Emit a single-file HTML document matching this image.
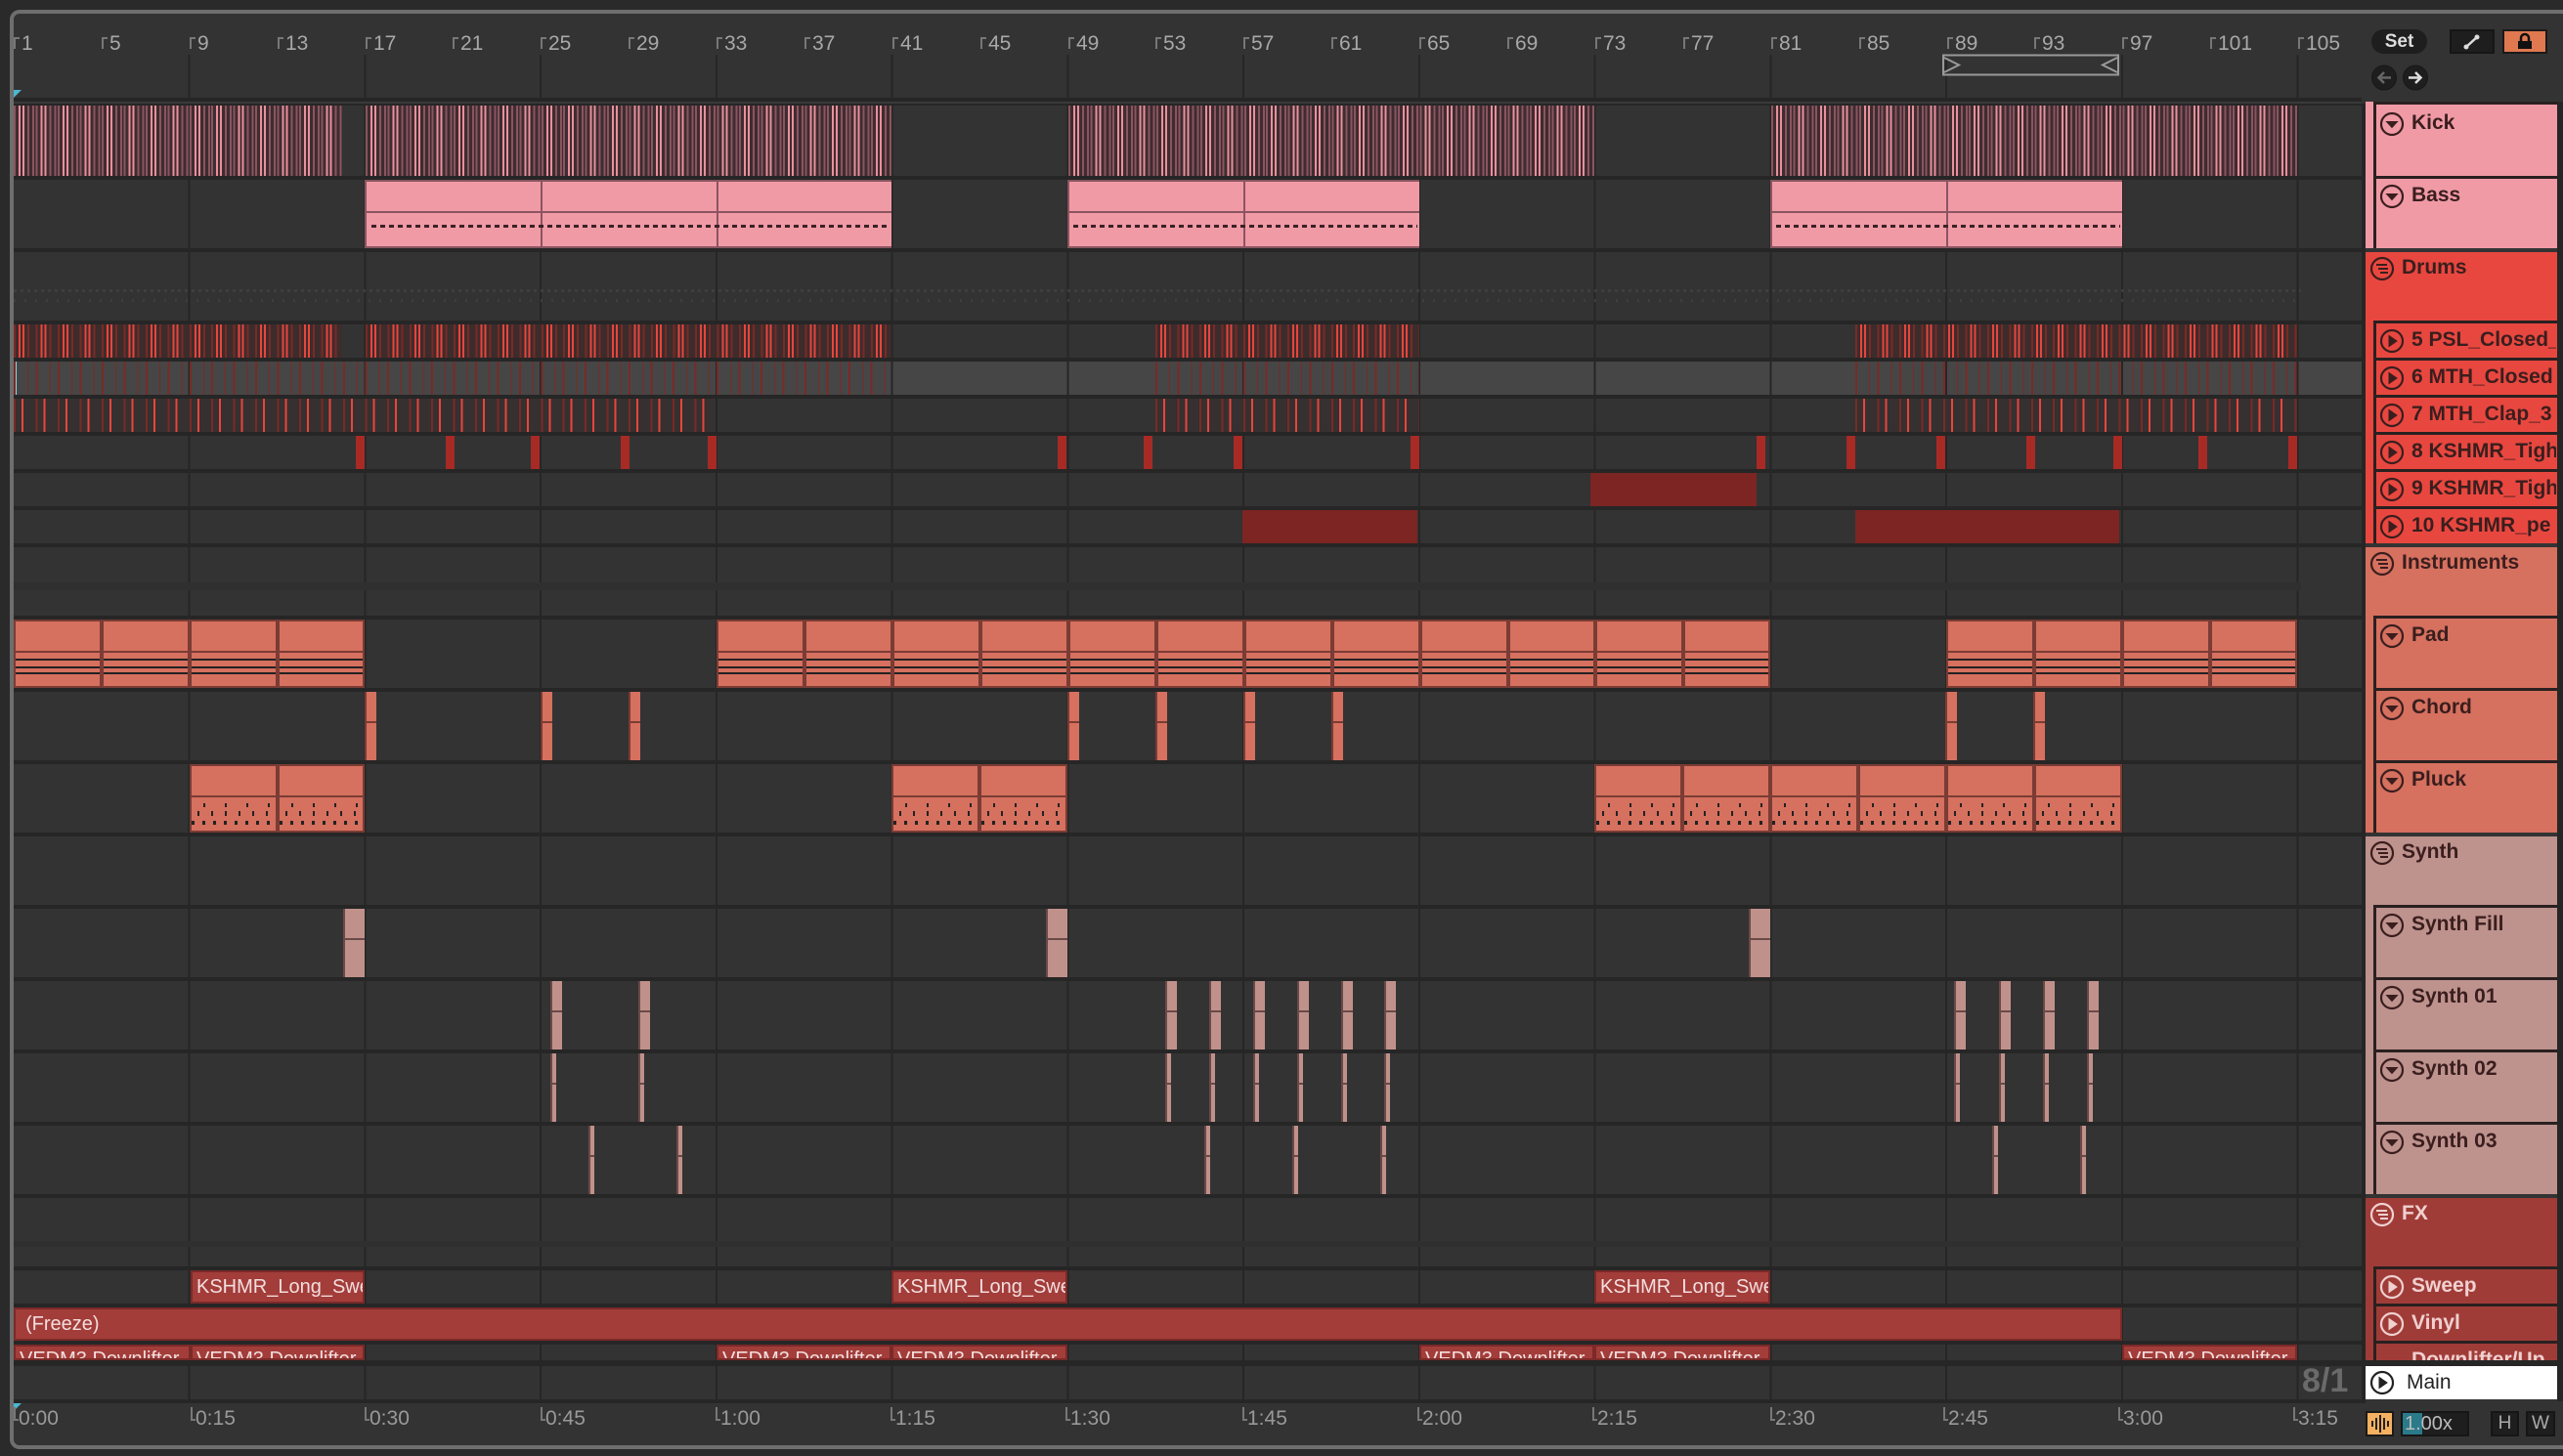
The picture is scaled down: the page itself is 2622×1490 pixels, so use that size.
<!DOCTYPE html>
<html><head><meta charset="utf-8">
<style>
*{margin:0;padding:0;box-sizing:border-box}
body{width:2622px;height:1490px;background:#2a2a2a;position:relative;overflow:hidden;font-family:"Liberation Sans",sans-serif}
.a{position:absolute}
#frame{left:10px;top:10px;width:2614px;height:1473px;border:4px solid #6e6e6e;border-right:none;border-radius:10px 0 0 10px;background:#333}
.row{position:absolute;left:14px;width:2402px;background-color:#333;background-image:repeating-linear-gradient(90deg,transparent 0 177.75px,#262626 177.75px 179.75px);background-position:1px 0}
.rl{position:absolute;top:33px;font-size:21px;color:#a8a8a8}
.tk{position:absolute;top:38px;width:6px;height:12px;border-left:2px solid #777;border-top:2px solid #777}
.bl{position:absolute;top:1440px;font-size:21px;color:#999}
.bt{position:absolute;top:1440px;width:5px;height:14px;border-left:2px solid #777;border-bottom:2px solid #777}
.kick{position:absolute;top:108px;height:72px;background:repeating-linear-gradient(90deg,#8a5560 0 2px,#3e2c30 2px 5px,#e8909c 5px 7px,#3e2c30 7px 9px,#e8909c 9px 11px,#3e2c30 11px 14px,#8a5560 14px 16px,#3e2c30 16px 19px,#8a5560 19px 21px,#3e2c30 21px 22.47px)}
.bass{position:absolute;top:184px;height:70px;background:linear-gradient(#f09aa6 0 30px,#8a5560 30px 32px,#f09aa6 32px);border:2px solid #8a5560;border-right:none}
.psl{position:absolute;top:332px;height:34px;background:repeating-linear-gradient(90deg,#7a2a26 0 2px,#3d2c2c 2px 5px,#e8453c 5px 7px,#3d2c2c 7px 9px,#e8453c 9px 11px,#3d2c2c 11px 14px,#7a2a26 14px 16px,#3d2c2c 16px 22.47px)}
.mth{position:absolute;top:370px;height:34px;background:repeating-linear-gradient(90deg,#7a2a26 0 2px,transparent 2px 14px,#7a2a26 14px 15px,transparent 15px 22.47px)}
.clap{position:absolute;top:408px;height:34px;background:repeating-linear-gradient(90deg,#7a2a26 0 2px,#363030 2px 8px,#e8453c 8px 10px,#363030 10px 22.47px)}
.k8{position:absolute;top:446px;height:34px;width:9px;background:#a82a25}
.blk{position:absolute;height:34px;background:#7c2522}
.pad{position:absolute;top:634px;height:70px;border:2px solid #7a3c34;background:linear-gradient(#d6705f 0 30px,#7a3c34 30px 32px,#d6705f 32px 38px,#222 38px 40px,#d6705f 40px 46px,#222 46px 48px,#d6705f 48px 52px,#222 52px 54px,#d6705f 54px)}
.pl{position:absolute;top:782px;height:70px;border:2px solid #7a3c34;background:
 repeating-linear-gradient(90deg,#222 0 3px,transparent 3px 11px) 0 56px/100% 4px no-repeat,
 repeating-linear-gradient(90deg,transparent 0 6px,#222 6px 8px,transparent 8px 14px) 0 46px/100% 5px no-repeat,
 repeating-linear-gradient(90deg,transparent 0 12px,#222 12px 14px,transparent 14px 22px) 0 38px/100% 4px no-repeat,
 linear-gradient(#d6705f 0 30px,#7a3c34 30px 32px,#d6705f 32px)}
.ch{position:absolute;top:708px;height:70px;width:12px;border-left:2px solid #7a3c34;background:linear-gradient(#d6705f 0 30px,#7a3c34 30px 32px,#d6705f 32px)}
.sf{position:absolute;top:930px;height:70px;width:22px;border-left:2px solid #6a4a48;background:linear-gradient(#c0918b 0 30px,#6a4a48 30px 32px,#c0918b 32px)}
.s1{position:absolute;top:1004px;height:70px;width:12px;border-left:2px solid #6a4a48;background:linear-gradient(#c0918b 0 30px,#6a4a48 30px 32px,#c0918b 32px)}
.s2{position:absolute;top:1078px;height:70px;width:6px;border-left:2px solid #6a4a48;background:linear-gradient(#c0918b 0 30px,#6a4a48 30px 32px,#c0918b 32px)}
.s3{position:absolute;top:1152px;height:70px;width:6px;border-left:2px solid #6a4a48;background:linear-gradient(#c0918b 0 30px,#6a4a48 30px 32px,#c0918b 32px)}
.fxc{position:absolute;background:#a33d3a;border:2px solid #7a2a28;color:#f2dede;font-size:20px;white-space:nowrap;overflow:hidden;padding-left:4px;font-family:"Liberation Sans Narrow","Liberation Sans",sans-serif}
.grp{position:absolute;left:2420px;width:196px}
.ch2{position:absolute;left:2420px;width:196px;border-left:8px solid var(--g);}
.ch2 .in{position:absolute;left:0;top:0;right:0;bottom:0;border-left:3px solid #2a2020;border-top:3px solid #2a2020;background:var(--c)}
.lbl{position:absolute;font-size:21px;font-weight:bold;color:#3a1e1e;white-space:nowrap;overflow:hidden}
svg.ic{position:absolute}
</style></head><body>
<div id="frame" class="a"></div>

<div class="a" style="left:14px;top:56px;width:2402px;height:44px;background-color:#333;background-image:repeating-linear-gradient(90deg,transparent 0 177.75px,#262626 177.75px 179.75px);background-position:1px 0"></div>
<div class="a" style="left:14px;top:100px;width:2402px;height:4px;background:#262626"></div>
<div class="a" style="left:14px;top:104px;width:2402px;height:2px;background:#3a3a3a"></div>
<div class="a" style="left:14px;top:106px;width:2406px;height:1330px;background:#262626"></div>
<div class="a" style="left:14px;top:92px;width:0;height:0;border-top:8px solid #4ab8d0;border-right:8px solid transparent"></div>

<div class="tk" style="left:14px"></div><div class="rl" style="left:22px">1</div>
<div class="tk" style="left:104px"></div><div class="rl" style="left:112px">5</div>
<div class="tk" style="left:194px"></div><div class="rl" style="left:202px">9</div>
<div class="tk" style="left:284px"></div><div class="rl" style="left:292px">13</div>
<div class="tk" style="left:374px"></div><div class="rl" style="left:382px">17</div>
<div class="tk" style="left:463px"></div><div class="rl" style="left:471px">21</div>
<div class="tk" style="left:553px"></div><div class="rl" style="left:561px">25</div>
<div class="tk" style="left:643px"></div><div class="rl" style="left:651px">29</div>
<div class="tk" style="left:733px"></div><div class="rl" style="left:741px">33</div>
<div class="tk" style="left:823px"></div><div class="rl" style="left:831px">37</div>
<div class="tk" style="left:913px"></div><div class="rl" style="left:921px">41</div>
<div class="tk" style="left:1003px"></div><div class="rl" style="left:1011px">45</div>
<div class="tk" style="left:1093px"></div><div class="rl" style="left:1101px">49</div>
<div class="tk" style="left:1182px"></div><div class="rl" style="left:1190px">53</div>
<div class="tk" style="left:1272px"></div><div class="rl" style="left:1280px">57</div>
<div class="tk" style="left:1362px"></div><div class="rl" style="left:1370px">61</div>
<div class="tk" style="left:1452px"></div><div class="rl" style="left:1460px">65</div>
<div class="tk" style="left:1542px"></div><div class="rl" style="left:1550px">69</div>
<div class="tk" style="left:1632px"></div><div class="rl" style="left:1640px">73</div>
<div class="tk" style="left:1722px"></div><div class="rl" style="left:1730px">77</div>
<div class="tk" style="left:1812px"></div><div class="rl" style="left:1820px">81</div>
<div class="tk" style="left:1902px"></div><div class="rl" style="left:1910px">85</div>
<div class="tk" style="left:1992px"></div><div class="rl" style="left:2000px">89</div>
<div class="tk" style="left:2081px"></div><div class="rl" style="left:2089px">93</div>
<div class="tk" style="left:2171px"></div><div class="rl" style="left:2179px">97</div>
<div class="tk" style="left:2261px"></div><div class="rl" style="left:2269px">101</div>
<div class="tk" style="left:2351px"></div><div class="rl" style="left:2359px">105</div>

<svg class="ic" style="left:1986px;top:55px" width="184" height="24"><rect x="2" y="1.5" width="179" height="20" fill="none" stroke="#9a9a9a" stroke-width="2"/><path d="M3 4 L18 11.5 L3 19 M180 4 L165 11.5 L180 19" fill="none" stroke="#9a9a9a" stroke-width="2"/></svg>

<div class="row" style="top:108px;height:72px"></div>
<div class="row" style="top:184px;height:70px"></div>
<div class="row" style="top:258px;height:70px"></div>
<div class="row" style="top:332px;height:34px"></div>
<div class="row" style="top:370px;height:34px;background-color:#464646"></div>
<div class="row" style="top:408px;height:34px"></div>
<div class="row" style="top:446px;height:34px"></div>
<div class="row" style="top:484px;height:34px"></div>
<div class="row" style="top:522px;height:34px"></div>
<div class="row" style="top:560px;height:70px"></div>
<div class="row" style="top:634px;height:70px"></div>
<div class="row" style="top:708px;height:70px"></div>
<div class="row" style="top:782px;height:70px"></div>
<div class="row" style="top:856px;height:70px"></div>
<div class="row" style="top:930px;height:70px"></div>
<div class="row" style="top:1004px;height:70px"></div>
<div class="row" style="top:1078px;height:70px"></div>
<div class="row" style="top:1152px;height:70px"></div>
<div class="row" style="top:1226px;height:70px"></div>
<div class="row" style="top:1300px;height:34px"></div>
<div class="row" style="top:1338px;height:34px"></div>
<div class="row" style="top:1376px;height:16px"></div>
<div class="row" style="top:1398px;height:34px"></div>
<div class="a" style="left:14px;top:370px;width:3px;height:34px;background:#8ad8ea"></div>

<div class="a" style="left:14px;top:296px;width:2340px;height:3px;background:repeating-linear-gradient(90deg,#3e3e3e 0 3px,transparent 3px 7px)"></div>
<div class="a" style="left:14px;top:306px;width:2340px;height:3px;background:repeating-linear-gradient(90deg,#3e3e3e 0 2px,transparent 2px 11px)"></div>
<div class="a" style="left:14px;top:596px;width:2340px;height:8px;background:#2f2f2f"></div>
<div class="a" style="left:14px;top:1270px;width:2340px;height:6px;background:#2f2f2f"></div>

<div class="kick" style="left:14px;width:336px"></div>
<div class="kick" style="left:374px;width:538px"></div>
<div class="kick" style="left:1093px;width:538px"></div>
<div class="kick" style="left:1812px;width:538px"></div>
<div class="bass" style="left:373px;width:180px"></div><div class="bass" style="left:553px;width:180px"></div><div class="bass" style="left:733px;width:179px"></div>
<div class="bass" style="left:1092px;width:180px"></div><div class="bass" style="left:1272px;width:180px"></div>
<div class="bass" style="left:1811px;width:180px"></div><div class="bass" style="left:1991px;width:180px"></div>
<div class="a" style="left:380px;top:230px;width:530px;height:3px;background:repeating-linear-gradient(90deg,#3a2226 0 5px,transparent 5px 9px)"></div>
<div class="a" style="left:1098px;top:230px;width:352px;height:3px;background:repeating-linear-gradient(90deg,#3a2226 0 5px,transparent 5px 9px)"></div>
<div class="a" style="left:1817px;top:230px;width:352px;height:3px;background:repeating-linear-gradient(90deg,#3a2226 0 5px,transparent 5px 9px)"></div>
<div class="psl" style="left:14px;width:336px"></div><div class="psl" style="left:374px;width:538px"></div><div class="psl" style="left:1182px;width:270px"></div><div class="psl" style="left:1898px;width:452px"></div>
<div class="mth" style="left:14px;width:898px"></div><div class="mth" style="left:1182px;width:270px"></div><div class="mth" style="left:1898px;width:452px"></div>
<div class="clap" style="left:14px;width:713px"></div><div class="clap" style="left:1182px;width:270px"></div><div class="clap" style="left:1898px;width:452px"></div>
<div class="k8" style="left:364px"></div><div class="k8" style="left:456px"></div><div class="k8" style="left:543px"></div><div class="k8" style="left:635px"></div><div class="k8" style="left:724px"></div><div class="k8" style="left:1082px"></div><div class="k8" style="left:1170px"></div><div class="k8" style="left:1262px"></div><div class="k8" style="left:1443px"></div><div class="k8" style="left:1797px"></div><div class="k8" style="left:1889px"></div><div class="k8" style="left:1981px"></div><div class="k8" style="left:2073px"></div><div class="k8" style="left:2162px"></div><div class="k8" style="left:2249px"></div><div class="k8" style="left:2341px"></div>
<div class="blk" style="left:1627px;top:484px;width:170px"></div>
<div class="blk" style="left:1271px;top:522px;width:179px"></div>
<div class="blk" style="left:1898px;top:522px;width:270px"></div>
<div class="pad" style="left:14px;width:90px"></div><div class="pad" style="left:104px;width:90px"></div><div class="pad" style="left:194px;width:90px"></div><div class="pad" style="left:284px;width:89px"></div>
<div class="pad" style="left:733px;width:90px"></div><div class="pad" style="left:823px;width:90px"></div><div class="pad" style="left:913px;width:90px"></div><div class="pad" style="left:1003px;width:90px"></div><div class="pad" style="left:1093px;width:90px"></div><div class="pad" style="left:1183px;width:90px"></div><div class="pad" style="left:1273px;width:90px"></div><div class="pad" style="left:1363px;width:90px"></div><div class="pad" style="left:1453px;width:90px"></div><div class="pad" style="left:1543px;width:89px"></div><div class="pad" style="left:1632px;width:90px"></div><div class="pad" style="left:1722px;width:89px"></div>
<div class="pad" style="left:1991px;width:90px"></div><div class="pad" style="left:2081px;width:90px"></div><div class="pad" style="left:2171px;width:90px"></div><div class="pad" style="left:2261px;width:89px"></div>
<div class="ch" style="left:373px"></div><div class="ch" style="left:553px"></div><div class="ch" style="left:643px"></div><div class="ch" style="left:1092px"></div><div class="ch" style="left:1182px"></div><div class="ch" style="left:1272px"></div><div class="ch" style="left:1362px"></div><div class="ch" style="left:1990px"></div><div class="ch" style="left:2080px"></div>
<div class="pl" style="left:194px;width:90px"></div><div class="pl" style="left:284px;width:89px"></div>
<div class="pl" style="left:912px;width:90px"></div><div class="pl" style="left:1002px;width:90px"></div>
<div class="pl" style="left:1631px;width:90px"></div><div class="pl" style="left:1721px;width:90px"></div><div class="pl" style="left:1811px;width:90px"></div><div class="pl" style="left:1901px;width:90px"></div><div class="pl" style="left:1991px;width:90px"></div><div class="pl" style="left:2081px;width:90px"></div>
<div class="sf" style="left:351px"></div><div class="sf" style="left:1070px"></div><div class="sf" style="left:1789px"></div>
<div class="s1" style="left:563px"></div><div class="s1" style="left:653px"></div><div class="s1" style="left:1192px"></div><div class="s1" style="left:1237px"></div><div class="s1" style="left:1282px"></div><div class="s1" style="left:1327px"></div><div class="s1" style="left:1372px"></div><div class="s1" style="left:1416px"></div><div class="s1" style="left:1999px"></div><div class="s1" style="left:2045px"></div><div class="s1" style="left:2090px"></div><div class="s1" style="left:2135px"></div>
<div class="s2" style="left:563px"></div><div class="s2" style="left:653px"></div><div class="s2" style="left:1192px"></div><div class="s2" style="left:1237px"></div><div class="s2" style="left:1282px"></div><div class="s2" style="left:1327px"></div><div class="s2" style="left:1372px"></div><div class="s2" style="left:1416px"></div><div class="s2" style="left:1999px"></div><div class="s2" style="left:2045px"></div><div class="s2" style="left:2090px"></div><div class="s2" style="left:2135px"></div>
<div class="s3" style="left:602px"></div><div class="s3" style="left:692px"></div><div class="s3" style="left:1232px"></div><div class="s3" style="left:1322px"></div><div class="s3" style="left:1412px"></div><div class="s3" style="left:2038px"></div><div class="s3" style="left:2128px"></div>
<div class="fxc" style="left:195px;top:1300px;width:178px;height:34px;line-height:30px">KSHMR_Long_Sweep</div>
<div class="fxc" style="left:912px;top:1300px;width:180px;height:34px;line-height:30px">KSHMR_Long_Sweep</div>
<div class="fxc" style="left:1631px;top:1300px;width:180px;height:34px;line-height:30px">KSHMR_Long_Sweep</div>
<div class="fxc" style="left:14px;top:1338px;width:2157px;height:34px;line-height:30px;padding-left:10px">(Freeze)</div>
<div class="fxc" style="left:14px;top:1376px;width:181px;height:16px;line-height:26px">VEDM3 Downlifter</div>
<div class="fxc" style="left:195px;top:1376px;width:178px;height:16px;line-height:26px">VEDM3 Downlifter</div>
<div class="fxc" style="left:733px;top:1376px;width:179px;height:16px;line-height:26px">VEDM3 Downlifter</div>
<div class="fxc" style="left:912px;top:1376px;width:180px;height:16px;line-height:26px">VEDM3 Downlifter</div>
<div class="fxc" style="left:1452px;top:1376px;width:179px;height:16px;line-height:26px">VEDM3 Downlifter</div>
<div class="fxc" style="left:1631px;top:1376px;width:180px;height:16px;line-height:26px">VEDM3 Downlifter</div>
<div class="fxc" style="left:2171px;top:1376px;width:179px;height:16px;line-height:26px">VEDM3 Downlifter</div>
<div class="a" style="left:2355px;top:1394px;font-size:34px;font-weight:bold;color:#6a6a6a">8/1</div>

<div class="a" style="left:14px;top:1432px;width:2406px;height:4px;background:#262626"></div>
<div class="a" style="left:14px;top:1436px;width:0;height:0;border-top:8px solid #4ab8d0;border-right:8px solid transparent"></div>
<div class="bt" style="left:14px"></div><div class="bl" style="left:19px">0:00</div>
<div class="bt" style="left:195px"></div><div class="bl" style="left:200px">0:15</div>
<div class="bt" style="left:373px"></div><div class="bl" style="left:378px">0:30</div>
<div class="bt" style="left:553px"></div><div class="bl" style="left:558px">0:45</div>
<div class="bt" style="left:732px"></div><div class="bl" style="left:737px">1:00</div>
<div class="bt" style="left:911px"></div><div class="bl" style="left:916px">1:15</div>
<div class="bt" style="left:1090px"></div><div class="bl" style="left:1095px">1:30</div>
<div class="bt" style="left:1271px"></div><div class="bl" style="left:1276px">1:45</div>
<div class="bt" style="left:1450px"></div><div class="bl" style="left:1455px">2:00</div>
<div class="bt" style="left:1629px"></div><div class="bl" style="left:1634px">2:15</div>
<div class="bt" style="left:1811px"></div><div class="bl" style="left:1816px">2:30</div>
<div class="bt" style="left:1988px"></div><div class="bl" style="left:1993px">2:45</div>
<div class="bt" style="left:2167px"></div><div class="bl" style="left:2172px">3:00</div>
<div class="bt" style="left:2346px"></div><div class="bl" style="left:2351px">3:15</div>

<div class="a" style="left:2426px;top:30px;width:57px;height:25px;border-radius:13px;background:#1e1e1e;color:#ddd;font-size:19px;font-weight:bold;text-align:center;line-height:25px">Set</div>
<div class="a" style="left:2506px;top:30px;width:46px;height:25px;background:#1e1e1e;border:2px solid #161616"></div>
<svg class="ic" style="left:2518px;top:33px" width="22" height="20"><path d="M5 15 L16 5" stroke="#ddd" stroke-width="2.5"/><circle cx="5" cy="15" r="2.5" fill="#ddd"/><circle cx="16" cy="5" r="2.5" fill="#ddd"/></svg>
<div class="a" style="left:2560px;top:30px;width:46px;height:25px;background:#e07850;border:2px solid #1a1a1a"></div>
<svg class="ic" style="left:2574px;top:33px" width="18" height="19"><path d="M5 9 V6 a4 4 0 0 1 8 0 V9" fill="none" stroke="#111" stroke-width="2.5"/><rect x="2" y="9" width="14" height="8" fill="#111"/></svg>
<svg class="ic" style="left:2426px;top:66px" width="60" height="27"><circle cx="13" cy="13.5" r="12.5" fill="#1e1e1e" stroke="#181818"/><circle cx="45" cy="13.5" r="12.5" fill="#1e1e1e" stroke="#181818"/><path d="M20 13.5 H8 M13 8 L7.5 13.5 L13 19" stroke="#666" stroke-width="2.5" fill="none"/><path d="M38 13.5 H50 M45 8 L50.5 13.5 L45 19" stroke="#ddd" stroke-width="2.5" fill="none"/></svg>

<div class="a" style="left:2420px;top:104px;width:196px;height:4px;background:#f09aa6"></div>
<div class="ch2" style="top:104px;height:76px;--g:#f09aa6;--c:#f09aa6"><div class="in"></div></div>
<div class="ch2" style="top:180px;height:74px;--g:#f09aa6;--c:#f09aa6"><div class="in"></div></div>
<div class="grp" style="top:258px;height:74px;background:#e8473f"></div>
<div class="ch2" style="top:328px;height:38px;--g:#e8473f;--c:#e8473f"><div class="in"></div></div>
<div class="ch2" style="top:366px;height:38px;--g:#e8473f;--c:#e8473f"><div class="in"></div></div>
<div class="ch2" style="top:404px;height:38px;--g:#e8473f;--c:#e8473f"><div class="in"></div></div>
<div class="ch2" style="top:442px;height:38px;--g:#e8473f;--c:#e8473f"><div class="in"></div></div>
<div class="ch2" style="top:480px;height:38px;--g:#e8473f;--c:#e8473f"><div class="in"></div></div>
<div class="ch2" style="top:518px;height:38px;--g:#e8473f;--c:#e8473f"><div class="in"></div></div>
<div class="grp" style="top:560px;height:70px;background:#d6705f"></div>
<div class="ch2" style="top:630px;height:74px;--g:#d6705f;--c:#d6705f"><div class="in"></div></div>
<div class="ch2" style="top:704px;height:74px;--g:#d6705f;--c:#d6705f"><div class="in"></div></div>
<div class="ch2" style="top:778px;height:74px;--g:#d6705f;--c:#d6705f"><div class="in"></div></div>
<div class="grp" style="top:856px;height:70px;background:#be928d"></div>
<div class="ch2" style="top:926px;height:74px;--g:#be928d;--c:#be928d"><div class="in"></div></div>
<div class="ch2" style="top:1000px;height:74px;--g:#be928d;--c:#be928d"><div class="in"></div></div>
<div class="ch2" style="top:1074px;height:74px;--g:#be928d;--c:#be928d"><div class="in"></div></div>
<div class="ch2" style="top:1148px;height:74px;--g:#be928d;--c:#be928d"><div class="in"></div></div>
<div class="grp" style="top:1226px;height:70px;background:#a03c38"></div>
<div class="ch2" style="top:1296px;height:38px;--g:#a03c38;--c:#a03c38"><div class="in"></div></div>
<div class="ch2" style="top:1334px;height:38px;--g:#a03c38;--c:#a03c38"><div class="in"></div></div>
<div class="ch2" style="top:1372px;height:20px;--g:#a03c38;--c:#a03c38"><div class="in"></div></div>
<div class="a" style="left:2420px;top:1398px;width:196px;height:34px;background:#fff"></div>

<svg class="ic" style="left:2420px;top:100px" width="200" height="1340">
<defs>
<g id="dn"><circle cx="12" cy="12" r="11" fill="none" stroke-width="2.2"/><path d="M6.5 9.5 H17.5 L12 15.5 Z"/></g>
<g id="pl"><circle cx="12" cy="12" r="11" fill="none" stroke-width="2.2"/><path d="M9 6.5 V17.5 L17 12 Z"/></g>
<g id="gr"><circle cx="12" cy="12" r="11" fill="none" stroke-width="2.2"/><path d="M6 8 H17 M8 12 H18 M10 16 H18" stroke-width="2" fill="none"/></g>
</defs>
<g fill="#3a1e1e" stroke="#3a1e1e">
<use href="#dn" x="15" y="15"/>
<use href="#dn" x="15" y="89"/>
<use href="#gr" x="5" y="163"/>
<use href="#pl" x="15" y="237"/>
<use href="#pl" x="15" y="275"/>
<use href="#pl" x="15" y="313"/>
<use href="#pl" x="15" y="351"/>
<use href="#pl" x="15" y="389"/>
<use href="#pl" x="15" y="427"/>
<use href="#gr" x="5" y="465"/>
<use href="#dn" x="15" y="539"/>
<use href="#dn" x="15" y="613"/>
<use href="#dn" x="15" y="687"/>
<use href="#gr" x="5" y="761"/>
<use href="#dn" x="15" y="835"/>
<use href="#dn" x="15" y="909"/>
<use href="#dn" x="15" y="983"/>
<use href="#dn" x="15" y="1057"/>
</g>
<g fill="#f0d0d0" stroke="#f0d0d0">
<use href="#gr" x="5" y="1131"/>
<use href="#pl" x="15" y="1205"/>
<use href="#pl" x="15" y="1243"/>
</g>
<g fill="#222" stroke="#222"><use href="#pl" x="5" y="1303"/></g>
</svg>
<div class="lbl" style="left:2467px;top:114px">Kick</div>
<div class="lbl" style="left:2467px;top:188px">Bass</div>
<div class="lbl" style="left:2457px;top:262px">Drums</div>
<div class="lbl" style="left:2467px;top:336px;width:148px">5 PSL_Closed_</div>
<div class="lbl" style="left:2467px;top:374px;width:148px">6 MTH_Closed</div>
<div class="lbl" style="left:2467px;top:412px;width:148px">7 MTH_Clap_3</div>
<div class="lbl" style="left:2467px;top:450px;width:148px">8 KSHMR_Tigh</div>
<div class="lbl" style="left:2467px;top:488px;width:148px">9 KSHMR_Tigh</div>
<div class="lbl" style="left:2467px;top:526px;width:148px">10 KSHMR_pe</div>
<div class="lbl" style="left:2457px;top:564px">Instruments</div>
<div class="lbl" style="left:2467px;top:638px">Pad</div>
<div class="lbl" style="left:2467px;top:712px">Chord</div>
<div class="lbl" style="left:2467px;top:786px">Pluck</div>
<div class="lbl" style="left:2457px;top:860px">Synth</div>
<div class="lbl" style="left:2467px;top:934px">Synth Fill</div>
<div class="lbl" style="left:2467px;top:1008px">Synth 01</div>
<div class="lbl" style="left:2467px;top:1082px">Synth 02</div>
<div class="lbl" style="left:2467px;top:1156px">Synth 03</div>
<div class="lbl" style="left:2457px;top:1230px;color:#f0d0d0">FX</div>
<div class="lbl" style="left:2467px;top:1304px;color:#f0d0d0">Sweep</div>
<div class="lbl" style="left:2467px;top:1342px;color:#f0d0d0">Vinyl</div>
<div class="lbl" style="left:2467px;top:1380px;height:12px;color:#f0d0d0;width:148px">Downlifter/Up</div>
<div class="lbl" style="left:2462px;top:1403px;font-weight:normal;color:#222">Main</div>
<div class="a" style="left:2420px;top:1392px;width:200px;height:6px;background:#262626"></div>

<div class="a" style="left:2420px;top:1444px;width:29px;height:26px;background:#f5b060;border:2px solid #1a1a1a"></div>
<svg class="ic" style="left:2424px;top:1447px" width="22" height="20"><path d="M3 7V13 M7 4V16 M11 1V19 M15 4V16 M19 7V13" stroke="#222" stroke-width="2"/></svg>
<div class="a" style="left:2456px;top:1444px;width:70px;height:26px;background:#1e1e1e;border:2px solid #161616"></div>
<div class="a" style="left:2458px;top:1446px;width:20px;height:22px;background:#2a7a8a"></div>
<div class="a" style="left:2460px;top:1444px;font-size:20px;color:#bbb;line-height:26px">1.00x</div>
<div class="a" style="left:2548px;top:1444px;width:29px;height:26px;background:#1e1e1e;border:2px solid #161616;color:#aaa;font-size:19px;text-align:center;line-height:22px">H</div>
<div class="a" style="left:2584px;top:1444px;width:30px;height:26px;background:#1e1e1e;border:2px solid #161616;color:#aaa;font-size:19px;text-align:center;line-height:22px">W</div>
<div class="a" style="left:2616px;top:104px;width:6px;height:1330px;background:#262626"></div>
</body></html>
